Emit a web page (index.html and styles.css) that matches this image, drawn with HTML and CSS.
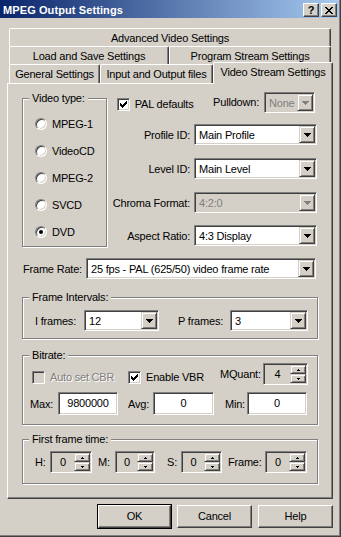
FILE: index.html
```html
<!DOCTYPE html>
<html lang="en">
<head>
    <meta charset="UTF-8">
    <meta name="viewport" content="width=device-width, initial-scale=1.0">
    <title>MPEG Output Settings</title>
    <link rel="stylesheet" href="styles.css">
</head>
<body>
<div class="window">
    <div class="titlebar">
        <span class="title">MPEG Output Settings</span>
        <span class="cap-btn help-btn">?</span>
        <span class="cap-btn close-btn">
            <svg width="8" height="7" viewBox="0 0 8 7"><path d="M0 0h2v1H0zM6 0h2v1H6zM1 1h2v1H1zM5 1h2v1H5zM2 2h4v1H2zM3 3h2v1H3zM2 4h4v1H2zM1 5h2v1H1zM5 5h2v1H5zM0 6h2v1H0zM6 6h2v1H6z"/></svg>
        </span>
    </div>

    <div class="tabs">
        <div class="tab-row">
            <div class="tab tab-advanced">Advanced Video Settings</div>
        </div>
        <div class="tab-row">
            <div class="tab tab-load">Load and Save Settings</div>
            <div class="tab tab-program">Program Stream Settings</div>
        </div>
        <div class="tab-row front">
            <div class="tab tab-general">General Settings</div>
            <div class="tab tab-io">Input and Output files</div>
            <div class="tab tab-video active">Video Stream Settings</div>
        </div>
    </div>

    <div class="panel">
        <div class="top-section">
            <div class="group video-type">
                <div class="group-title">Video type:</div>
                <div class="radio-list">
                    <div class="radio-item"><span class="radio"></span>MPEG-1</div>
                    <div class="radio-item"><span class="radio"></span>VideoCD</div>
                    <div class="radio-item"><span class="radio"></span>MPEG-2</div>
                    <div class="radio-item"><span class="radio"></span>SVCD</div>
                    <div class="radio-item"><span class="radio"><span class="dot"></span></span>DVD</div>
                </div>
            </div>

            <div class="stream-opts">
                <div class="opt-row pal-row">
                    <div class="check-item pal-check">
                        <span class="check"><svg width="7" height="7" viewBox="0 0 7 7"><path d="M0 2h1v3H0zM1 3h1v3H1zM2 4h1v3H2zM3 3h1v3H3zM4 2h1v3H4zM5 1h1v3H5zM6 0h1v3H6z"/></svg></span>PAL defaults
                    </div>
                    <span class="pulldown-label">Pulldown:</span>
                    <div class="combo pulldown disabled">
                        <span class="combo-text">None</span>
                        <span class="drop"><svg width="7" height="4" viewBox="0 0 7 4"><path d="M0 0h7v1H0zM1 1h5v1H1zM2 2h3v1H2zM3 3h1v1H3z"/></svg></span>
                    </div>
                </div>
                <div class="opt-row profile-row">
                    <span class="opt-label">Profile ID:</span>
                    <div class="combo opt-combo">
                        <span class="combo-text">Main Profile</span>
                        <span class="drop"><svg width="7" height="4" viewBox="0 0 7 4"><path d="M0 0h7v1H0zM1 1h5v1H1zM2 2h3v1H2zM3 3h1v1H3z"/></svg></span>
                    </div>
                </div>
                <div class="opt-row">
                    <span class="opt-label">Level ID:</span>
                    <div class="combo opt-combo">
                        <span class="combo-text">Main Level</span>
                        <span class="drop"><svg width="7" height="4" viewBox="0 0 7 4"><path d="M0 0h7v1H0zM1 1h5v1H1zM2 2h3v1H2zM3 3h1v1H3z"/></svg></span>
                    </div>
                </div>
                <div class="opt-row">
                    <span class="opt-label">Chroma Format:</span>
                    <div class="combo opt-combo disabled">
                        <span class="combo-text">4:2:0</span>
                        <span class="drop"><svg width="7" height="4" viewBox="0 0 7 4"><path d="M0 0h7v1H0zM1 1h5v1H1zM2 2h3v1H2zM3 3h1v1H3z"/></svg></span>
                    </div>
                </div>
                <div class="opt-row aspect-row">
                    <span class="opt-label">Aspect Ratio:</span>
                    <div class="combo opt-combo">
                        <span class="combo-text">4:3 Display</span>
                        <span class="drop"><svg width="7" height="4" viewBox="0 0 7 4"><path d="M0 0h7v1H0zM1 1h5v1H1zM2 2h3v1H2zM3 3h1v1H3z"/></svg></span>
                    </div>
                </div>
            </div>
        </div>

        <div class="rate-row">
            <span class="rate-label">Frame Rate:</span>
            <div class="combo rate-combo">
                <span class="combo-text">25 fps - PAL (625/50) video frame rate</span>
                <span class="drop"><svg width="7" height="4" viewBox="0 0 7 4"><path d="M0 0h7v1H0zM1 1h5v1H1zM2 2h3v1H2zM3 3h1v1H3z"/></svg></span>
            </div>
        </div>

        <div class="group intervals">
            <div class="group-title">Frame Intervals:</div>
            <div class="group-row">
                <span class="lbl lbl-i">I frames:</span>
                <div class="combo i-combo">
                    <span class="combo-text">12</span>
                    <span class="drop"><svg width="7" height="4" viewBox="0 0 7 4"><path d="M0 0h7v1H0zM1 1h5v1H1zM2 2h3v1H2zM3 3h1v1H3z"/></svg></span>
                </div>
                <span class="lbl lbl-p">P frames:</span>
                <div class="combo p-combo">
                    <span class="combo-text">3</span>
                    <span class="drop"><svg width="7" height="4" viewBox="0 0 7 4"><path d="M0 0h7v1H0zM1 1h5v1H1zM2 2h3v1H2zM3 3h1v1H3z"/></svg></span>
                </div>
            </div>
        </div>

        <div class="group bitrate">
            <div class="group-title">Bitrate:</div>
            <div class="group-row bitrate-top">
                <div class="check-item auto-cbr disabled"><span class="check disabled"></span>Auto set CBR</div>
                <div class="check-item vbr">
                    <span class="check"><svg width="7" height="7" viewBox="0 0 7 7"><path d="M0 2h1v3H0zM1 3h1v3H1zM2 4h1v3H2zM3 3h1v3H3zM4 2h1v3H4zM5 1h1v3H5zM6 0h1v3H6z"/></svg></span>Enable VBR
                </div>
                <span class="lbl lbl-mquant">MQuant:</span>
                <div class="spin spin-mquant">
                    <span class="spin-val">4</span>
                    <span class="spin-btns">
                        <span class="spin-btn"><svg width="3" height="2" viewBox="0 0 3 2"><path d="M1 0h1v1H1zM0 1h3v1H0z"/></svg></span>
                        <span class="spin-btn"><svg width="3" height="2" viewBox="0 0 3 2"><path d="M0 0h3v1H0zM1 1h1v1H1z"/></svg></span>
                    </span>
                </div>
            </div>
            <div class="group-row bitrate-bottom">
                <span class="lbl lbl-max">Max:</span>
                <div class="edit edit-max">9800000</div>
                <span class="lbl lbl-avg">Avg:</span>
                <div class="edit edit-avg">0</div>
                <span class="lbl lbl-min">Min:</span>
                <div class="edit edit-min">0</div>
            </div>
        </div>

        <div class="group first-frame">
            <div class="group-title">First frame time:</div>
            <div class="group-row">
                <span class="lbl lbl-h">H:</span>
                <div class="spin spin-h">
                    <span class="spin-val">0</span>
                    <span class="spin-btns">
                        <span class="spin-btn"><svg width="3" height="2" viewBox="0 0 3 2"><path d="M1 0h1v1H1zM0 1h3v1H0z"/></svg></span>
                        <span class="spin-btn"><svg width="3" height="2" viewBox="0 0 3 2"><path d="M0 0h3v1H0zM1 1h1v1H1z"/></svg></span>
                    </span>
                </div>
                <span class="lbl lbl-m">M:</span>
                <div class="spin spin-m">
                    <span class="spin-val">0</span>
                    <span class="spin-btns">
                        <span class="spin-btn"><svg width="3" height="2" viewBox="0 0 3 2"><path d="M1 0h1v1H1zM0 1h3v1H0z"/></svg></span>
                        <span class="spin-btn"><svg width="3" height="2" viewBox="0 0 3 2"><path d="M0 0h3v1H0zM1 1h1v1H1z"/></svg></span>
                    </span>
                </div>
                <span class="lbl lbl-s">S:</span>
                <div class="spin spin-s">
                    <span class="spin-val">0</span>
                    <span class="spin-btns">
                        <span class="spin-btn"><svg width="3" height="2" viewBox="0 0 3 2"><path d="M1 0h1v1H1zM0 1h3v1H0z"/></svg></span>
                        <span class="spin-btn"><svg width="3" height="2" viewBox="0 0 3 2"><path d="M0 0h3v1H0zM1 1h1v1H1z"/></svg></span>
                    </span>
                </div>
                <span class="lbl lbl-frame">Frame:</span>
                <div class="spin spin-frame">
                    <span class="spin-val">0</span>
                    <span class="spin-btns">
                        <span class="spin-btn"><svg width="3" height="2" viewBox="0 0 3 2"><path d="M1 0h1v1H1zM0 1h3v1H0z"/></svg></span>
                        <span class="spin-btn"><svg width="3" height="2" viewBox="0 0 3 2"><path d="M0 0h3v1H0zM1 1h1v1H1z"/></svg></span>
                    </span>
                </div>
            </div>
        </div>
    </div>

    <div class="buttons">
        <div class="btn default">OK</div>
        <div class="btn">Cancel</div>
        <div class="btn">Help</div>
    </div>
</div>
</body>
</html>
```

FILE: styles.css
```css
body {
    margin: 0;
    background: #d4d0c8;
    font-family: "Liberation Sans", Arial, sans-serif;
    font-size: 11px;
    letter-spacing: -0.2px;
    color: #000;
}
.window {
    width: 341px;
    height: 537px;
    box-sizing: border-box;
    padding-right: 1px;
    border-right: 1px solid #404040;
    border-bottom: 1px solid #404040;
    box-shadow: inset -1px -1px 0 #808080;
    overflow: hidden;
}

/* title bar */
.titlebar {
    display: flex;
    align-items: flex-start;
    height: 18px;
    padding: 0 2px 0 3px;
    background: linear-gradient(to right, #0a246a, #a6caf0);
}
.title {
    padding-top: 2px;
    line-height: 16px;
    color: #fff;
    font-weight: bold;
    letter-spacing: 0.1px;
}
.cap-btn {
    display: flex;
    align-items: center;
    justify-content: center;
    box-sizing: border-box;
    width: 16px;
    height: 14px;
    margin-top: 3px;
    background: #d4d0c8;
    border: 1px solid;
    border-color: #fff #404040 #404040 #fff;
    box-shadow: inset -1px -1px 0 #808080;
    font-weight: bold;
    line-height: 12px;
    letter-spacing: 0;
}
.help-btn { margin-left: auto; }
.close-btn { margin-left: 2px; }

/* tabs */
.tabs { padding-top: 10px; }
.tab-row {
    display: flex;
    align-items: flex-start;
    margin-left: 9px;
}
.tab {
    box-sizing: border-box;
    height: 18px;
    padding-top: 3px;
    line-height: 13px;
    text-align: center;
    white-space: nowrap;
    background: #d4d0c8;
    border-top: 1px solid #fff;
    border-left: 1px solid #fff;
    border-right: 1px solid #404040;
    border-radius: 2px 2px 0 0;
    box-shadow: inset -1px 0 0 #808080;
}
.tab-row.front .tab { height: 19px; }
.tab-row.front .tab.active {
    position: relative;
    z-index: 1;
    height: 22px;
    margin: -2px 0 -1px;
}
.tab-advanced { width: 322px; }
.tab-load { width: 160px; }
.tab-program { width: 162px; }
.tab-general { width: 91px; }
.tab-io { width: 113px; }
.tab-video { width: 120px; }

/* page panel */
.panel {
    box-sizing: border-box;
    width: 326px;
    height: 416px;
    margin-left: 7px;
    padding: 8px 14px 0 14px;
    border: 1px solid;
    border-color: #fff #404040 #404040 #fff;
    box-shadow: inset -1px -1px 0 #808080;
}

/* etched group box */
.group {
    border: 1px solid #808080;
    box-shadow: inset 1px 1px 0 #fff, 1px 1px 0 #fff;
}
.group-title {
    width: fit-content;
    margin: -7px 0 0 6px;
    padding: 0 3px;
    line-height: 13px;
    background: #d4d0c8;
}
.group-row {
    display: flex;
    align-items: center;
}

/* sunken fields */
.combo, .spin, .edit, .check {
    box-sizing: border-box;
    border: 1px solid;
    border-color: #808080 #fff #fff #808080;
    box-shadow: inset 1px 1px 0 #404040, inset -1px -1px 0 #d4d0c8;
    padding: 1px;
}
.combo {
    display: flex;
    height: 21px;
    background: #fff;
}
.combo-text {
    flex: 1;
    padding: 1px 0 0 3px;
    line-height: 16px;
    white-space: nowrap;
    overflow: hidden;
}
.combo.disabled { background: #d4d0c8; }
.combo.disabled .combo-text { color: #808080; }
.combo.disabled .drop svg { fill: #808080; }
.drop, .spin-btn {
    display: flex;
    align-items: center;
    justify-content: center;
    box-sizing: border-box;
    background: #d4d0c8;
    border: 1px solid;
    border-color: #d4d0c8 #404040 #404040 #d4d0c8;
    box-shadow: inset 1px 1px 0 #fff, inset -1px -1px 0 #808080;
}
.drop {
    width: 16px;
    height: 17px;
}
.spin {
    display: flex;
    height: 22px;
    background: #d4d0c8;
}
.spin-val {
    flex: 1;
    text-align: center;
    line-height: 18px;
}
.spin-btns {
    display: flex;
    flex-direction: column;
    width: 16px;
}
.spin-btn { height: 9px; }
.edit {
    height: 23px;
    background: #fff;
    text-align: center;
    line-height: 19px;
}

/* check boxes and radios */
.check-item {
    display: flex;
    align-items: center;
    gap: 5px;
    line-height: 13px;
    white-space: nowrap;
}
.check {
    display: flex;
    align-items: center;
    justify-content: center;
    width: 13px;
    height: 13px;
    background: #fff;
}
.check.disabled { background: #d4d0c8; }
.check-item.disabled {
    color: #808080;
    text-shadow: 1px 1px 0 #fff;
}
.radio-list { padding: 5px 0 1px 12px; }
.radio-item {
    display: flex;
    align-items: center;
    gap: 5px;
    height: 27px;
}
.radio {
    display: flex;
    align-items: center;
    justify-content: center;
    box-sizing: border-box;
    width: 12px;
    height: 12px;
    border-radius: 50%;
    background: #fff;
    border: 1px solid;
    border-color: #808080 #fff #fff #808080;
    box-shadow: inset 1px 1px 0 #404040, inset -1px -1px 0 #d4d0c8;
}
.dot {
    width: 4px;
    height: 4px;
    border-radius: 50%;
    background: #000;
}

/* top section */
.top-section {
    display: flex;
    align-items: flex-start;
}
.video-type {
    box-sizing: border-box;
    width: 85px;
    margin-top: 6px;
}
.stream-opts {
    flex: 1;
    margin-left: 6px;
}
.opt-row {
    display: flex;
    align-items: center;
    margin-top: 13px;
}
.opt-row.pal-row {
    align-items: flex-start;
    margin-top: 0;
}
.opt-row.profile-row { margin-top: 11px; }
.opt-row.aspect-row { margin-top: 12px; }
.pal-check {
    margin: 6px 0 0 4px;
}
.pulldown-label {
    margin: 0 5px 0 auto;
    line-height: 21px;
}
.pulldown {
    width: 51px;
    margin-right: 3px;
}
.opt-label {
    flex: 1;
    padding-right: 4px;
    text-align: right;
    white-space: nowrap;
}
.opt-combo {
    width: 123px;
    margin-right: 1px;
}

/* frame rate */
.rate-row {
    display: flex;
    align-items: center;
    margin-top: 11px;
}
.rate-label {
    width: 64px;
    box-sizing: border-box;
    padding-left: 1px;
}
.rate-combo { width: 230px; }

/* frame intervals */
.intervals { margin-top: 18px; }
.intervals .group-row { padding: 6px 0 7px 12px; }
.lbl { white-space: nowrap; }
.lbl-i { width: 49px; }
.i-combo { width: 75px; }
.lbl-p { width: 52px; margin-left: 19px; }
.p-combo { width: 78px; }

/* bitrate */
.bitrate { margin-top: 16px; }
.bitrate-top { padding: 1px 0 0 7px; }
.auto-cbr {
    width: 96px;
    margin: 7px 0 0 2px;
}
.vbr {
    width: 92px;
    margin-top: 7px;
}
.lbl-mquant { width: 43px; }
.spin-mquant { width: 45px; }
.bitrate-bottom {
    margin-top: 7px;
    padding: 0 0 9px 7px;
}
.lbl-max { width: 28px; }
.edit-max { width: 60px; }
.lbl-avg { width: 25px; margin-left: 10px; }
.edit-avg { width: 61px; }
.lbl-min { width: 22px; margin-left: 11px; }
.edit-min { width: 60px; }

/* first frame time */
.first-frame { margin-top: 14px; }
.first-frame .group-row { padding: 5px 0 10px 12px; }
.lbl-h { width: 15px; }
.spin-h { width: 42px; }
.lbl-m { width: 17px; margin-left: 6px; }
.spin-m { width: 40px; }
.lbl-s { width: 14px; margin-left: 12px; }
.spin-s { width: 41px; }
.lbl-frame { width: 37px; margin-left: 6px; }
.spin-frame { width: 42px; }

/* dialog buttons */
.buttons {
    display: flex;
    justify-content: flex-end;
    margin-top: 6px;
    padding-right: 6px;
}
.btn {
    box-sizing: border-box;
    width: 75px;
    height: 23px;
    margin-left: 6px;
    line-height: 21px;
    text-align: center;
    border: 1px solid;
    border-color: #fff #404040 #404040 #fff;
    box-shadow: inset -1px -1px 0 #808080;
}
.btn.default {
    width: 73px;
    margin-left: 0;
    outline: 1px solid #000;
}
```
